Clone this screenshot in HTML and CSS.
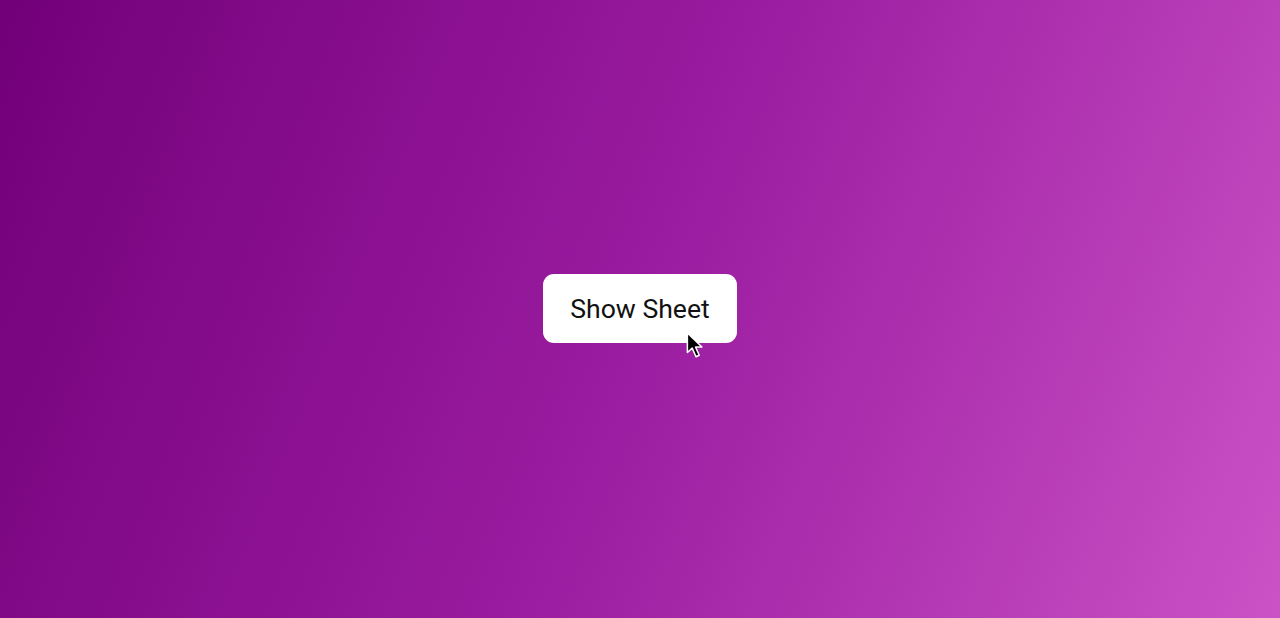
FILE: index.html
```html
<!DOCTYPE html>
<html>
<head>
<meta charset="utf-8">
<link rel="stylesheet" href="styles.css">
</head>
<body>
<main class="stage">
  <div class="btn-wrap">
    <button class="show-btn">Show Sheet</button>
    <svg class="cursor" width="20" height="28" viewBox="0 0 18 26">
      <path d="M1 1 L1 19 L5.5 15 L9 23 L12 21.6 L8.6 14 L14.5 14 Z" fill="#000" stroke="#fff" stroke-width="1.4" stroke-linejoin="round"/>
    </svg>
  </div>
</main>
</body>
</html>
```
FILE: styles.css
```css
html, body {
  margin: 0;
  padding: 0;
  height: 100%;
}
body {
  background: linear-gradient(112deg, #720079 0%, #9a1ca0 50%, #ca52c6 100%);
  font-family: Roboto, "Noto Sans", sans-serif;
  overflow: hidden;
}
.stage {
  height: 100vh;
  display: flex;
  align-items: center;
  justify-content: center;
}
.btn-wrap {
  position: relative;
}
.show-btn {
  display: block;
  width: 194px;
  height: 69px;
  margin-top: -1px;
  border: none;
  border-radius: 11px;
  background: #fff;
  color: #111;
  font-family: Roboto, "Noto Sans", sans-serif;
  font-size: 26.6px;
  font-weight: 400;
  padding: 0;
  cursor: pointer;
}
.cursor {
  position: absolute;
  left: 143px;
  top: 57px;
  pointer-events: none;
}
```
